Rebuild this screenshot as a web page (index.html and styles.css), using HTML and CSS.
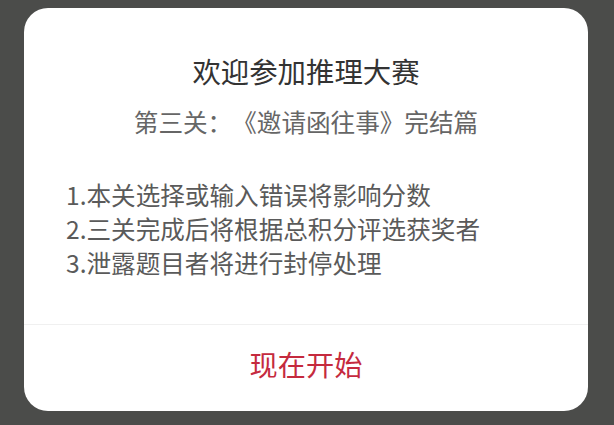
FILE: index.html
```html
<!DOCTYPE html>
<html lang="zh-CN">
<head>
<meta charset="utf-8">
<title>欢迎参加推理大赛</title>
<link rel="stylesheet" href="styles.css">
</head>
<body>
<div class="dialog">
  <div class="content">
    <h1 class="title">欢迎参加推理大赛</h1>
    <p class="subtitle">第三关：《邀请函往事》完结篇</p>
    <ol class="rules">
      <li>1.本关选择或输入错误将影响分数</li>
      <li>2.三关完成后将根据总积分评选获奖者</li>
      <li>3.泄露题目者将进行封停处理</li>
    </ol>
  </div>
  <div class="actions">
    <button class="start">现在开始</button>
  </div>
</div>
</body>
</html>
```
FILE: styles.css
```css
html, body {
  margin: 0;
  padding: 0;
  height: 100%;
}
body {
  background: #4b4c4a;
  font-family: "Noto Sans CJK SC", "Noto Sans", sans-serif;
  padding: 8px 26px 0 24px;
  box-sizing: border-box;
  text-spacing-trim: space-all;
}
.dialog {
  width: 564px;
  height: 403px;
  background: #ffffff;
  border-radius: 24px;
  display: flex;
  flex-direction: column;
  overflow: hidden;
}
.content {
  padding: 43px 0 0 42px;
  height: 316px;
  box-sizing: border-box;
}
.title {
  margin: 0;
  padding-right: 42px;
  text-align: center;
  font-size: 28.4px;
  line-height: 40px;
  font-weight: 400;
  color: #333333;
}
.subtitle {
  margin: 12px 0 0 0;
  padding-right: 42px;
  text-align: center;
  font-size: 24.6px;
  line-height: 36px;
  color: #666666;
  text-spacing-trim: space-all;
}
.rules {
  list-style: none;
  margin: 38px 0 0 0;
  padding: 0;
  font-size: 24.6px;
  line-height: 34px;
  color: #5a5a5a;
}
.actions {
  flex: 1;
  border-top: 1px solid #f0f0f0;
  display: flex;
  align-items: center;
  justify-content: center;
}
.start {
  border: none;
  background: none;
  padding: 0 0 8px 0;
  font-family: inherit;
  font-size: 28.2px;
  line-height: 40px;
  color: #c52a3e;
}
```
